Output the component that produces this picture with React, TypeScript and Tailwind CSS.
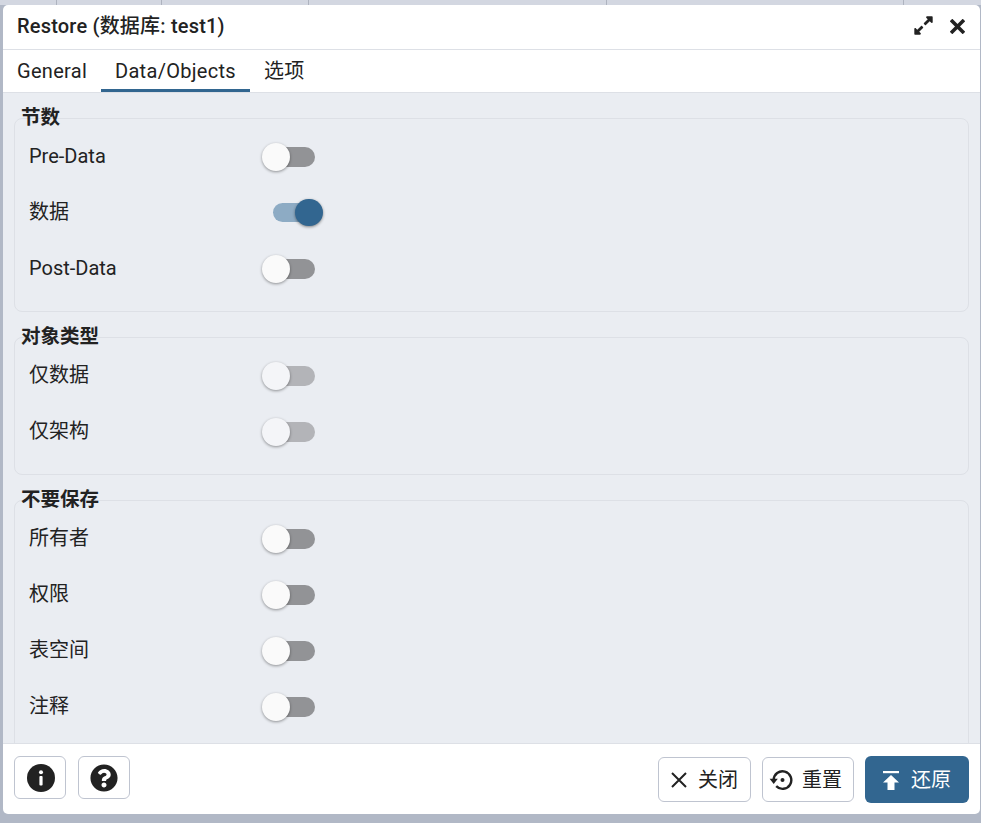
import React from "react";
import { FaExpandAlt, FaQuestionCircle } from "react-icons/fa";

function Toggle({ on, dim }: { on?: boolean; dim?: boolean }) {
  if (on) {
    return (
      <div className="relative w-[52px] h-[28px] ml-[11px] shrink-0">
        <div className="absolute left-0 top-[4px] w-[42px] h-[19px] rounded-full bg-[#8dabc4]" />
        <div className="absolute left-[22px] top-0 w-[28px] h-[27px] rounded-full bg-[#326690] shadow-[0_1px_3px_rgba(0,0,0,0.45)]" />
      </div>
    );
  }
  return (
    <div className="relative w-[53px] h-[28px] shrink-0">
      <div className={`absolute left-[13px] top-[4px] w-[40px] h-[20px] rounded-full ${dim ? "bg-[#b3b4b8]" : "bg-[#929396]"}`} />
      <div className={`absolute left-0 top-0 w-[28px] h-[28px] rounded-full shadow-[0_1px_3px_rgba(0,0,0,0.4)] ${dim ? "bg-[#f4f5f8]" : "bg-[#fafafa]"}`} />
    </div>
  );
}

function Row({ label, on, dim }: { label: string; on?: boolean; dim?: boolean }) {
  return (
    <div className="flex items-center h-[56px]">
      <div className="w-[233px] text-[20px] leading-[28px] text-[#222222] -mt-[3px]">{label}</div>
      <Toggle on={on} dim={dim} />
    </div>
  );
}

function Group({ title, children, className }: { title: string; children: React.ReactNode; className: string }) {
  return (
    <section className={`mx-[11px] ${className}`}>
      <h3 className="relative z-10 ml-[7px] h-[26px] -mb-[13px] text-[19.5px] leading-[26px] font-bold text-[#222222]">{title}</h3>
      <div className="border border-[#dde0e6] rounded-[8px] pl-[14px]">{children}</div>
    </section>
  );
}

export default function App() {
  return (
    <div
      className="relative w-[981px] h-[823px] overflow-hidden bg-[#b1b8c6]"
      style={{ fontFamily: '"Roboto", "Noto Sans CJK SC", sans-serif' }}
    >
      <div className="h-[5px] bg-[#d3d7e1] flex">
        <div className="w-[57px] border-r border-[#aeb3bf]" />
        <div className="w-[105px] border-r border-[#aeb3bf]" />
        <div className="w-[147px] border-r border-[#aeb3bf]" />
        <div className="w-[298px] border-r border-[#aeb3bf]" />
        <div className="w-[297px] border-r border-[#aeb3bf]" />
      </div>
      <div className="ml-[3px] w-[977px] h-[809px] bg-white rounded-[5px] flex flex-col overflow-hidden">
        <header className="h-[45px] shrink-0 border-b border-[#dde0e6] flex items-center pl-[14px] pr-[15px]">
          <div className="flex-1 text-[20px] text-[#222222] font-medium tracking-[0.2px] -mt-[3px]">Restore (数据库: test1)</div>
          <FaExpandAlt className="w-[19px] h-[21px] mr-[17px] -mt-[3px] text-[#222222]" />
          <svg className="w-[15px] h-[15px] -mt-[1px]" viewBox="0 0 15 15" fill="none" stroke="#222222" strokeWidth="3.6" strokeLinecap="square">
            <path d="M2.3 2.3l10.4 10.4M12.7 2.3L2.3 12.7" />
          </svg>
        </header>
        <nav className="h-[43px] shrink-0 flex border-b border-[#dde0e6] pl-[14px] text-[20px] text-[#222222] tracking-[0.3px]">
          <div className="w-[84px] h-[42px] flex items-center">General</div>
          <div className="w-[149px] h-[42px] flex items-center justify-center pt-[3px] border-b-[3px] border-[#326690]">Data/Objects</div>
          <div className="h-[42px] flex items-center pl-[14px]">选项</div>
        </nav>
        <main className="flex-1 min-h-0 overflow-hidden bg-[#eaedf2] pt-[12px]">
          <Group title="节数" className="">
            <div className="h-[192px] pt-[10px]">
              <Row label="Pre-Data" />
              <Row label="数据" on />
              <Row label="Post-Data" />
            </div>
          </Group>
          <Group title="对象类型" className="mt-[12px]">
            <div className="h-[136px] pt-[10px]">
              <Row label="仅数据" dim />
              <Row label="仅架构" dim />
            </div>
          </Group>
          <Group title="不要保存" className="mt-[12px]">
            <div className="h-[260px] pt-[10px]">
              <Row label="所有者" />
              <Row label="权限" />
              <Row label="表空间" />
              <Row label="注释" />
            </div>
          </Group>
        </main>
        <footer className="h-[71px] shrink-0 border-t border-[#dde0e6] flex items-center pl-[11px] pr-[11px]">
          <button className="w-[52px] h-[43px] mb-[3px] rounded-[6px] border border-[#bfc4d0] bg-white flex items-center justify-center pl-[1px]">
            <svg className="w-[28px] h-[28px]" viewBox="0 0 28 28">
              <circle cx="14" cy="14" r="14" fill="#222222" />
              <circle cx="14" cy="8.3" r="2" fill="#fff" />
              <rect x="12.4" y="12" width="3.2" height="9.5" rx="1" fill="#fff" />
            </svg>
          </button>
          <button className="ml-[12px] w-[52px] h-[43px] mb-[3px] rounded-[6px] border border-[#bfc4d0] bg-white flex items-center justify-center">
            <FaQuestionCircle className="w-[28px] h-[28px] text-[#222222]" />
          </button>
          <div className="flex-1" />
          <button className="w-[93px] h-[45px] mt-[1px] rounded-[6px] border border-[#bfc4d0] bg-white flex items-center pl-[11px] text-[20px] text-[#222222]">
            <svg className="w-[18px] h-[18px] mr-[10px]" viewBox="0 0 18 18" fill="none" stroke="#222222" strokeWidth="2">
              <path d="M2 2l14 14M16 2L2 16" />
            </svg>
            关闭
          </button>
          <button className="ml-[11px] w-[92px] h-[45px] mt-[1px] rounded-[6px] border border-[#bfc4d0] bg-white flex items-center pl-[6px] text-[20px] text-[#222222]">
            <svg className="w-[24px] h-[24px] mr-[9px]" viewBox="0 0 24 24">
              <path d="M4.7 12A8.8 8.8 0 1 1 7.2 18.2" fill="none" stroke="#222222" strokeWidth="2.4" />
              <path d="M0.6 10.8H8.8L4.7 16z" fill="#222222" />
              <circle cx="13.5" cy="12" r="2" fill="#222222" />
            </svg>
            重置
          </button>
          <button className="ml-[11px] w-[104px] h-[47px] mt-[1px] rounded-[6px] bg-[#326690] flex items-center pl-[17px] text-[20px] text-white">
            <svg className="w-[18px] h-[20px] mr-[11px]" viewBox="0 0 18 20" fill="#ffffff">
              <rect x="1" y="1" width="16" height="2.2" />
              <path d="M9 5l8 7.5h-4.5V20h-7v-7.5H1z" />
            </svg>
            还原
          </button>
        </footer>
      </div>
    </div>
  );
}
